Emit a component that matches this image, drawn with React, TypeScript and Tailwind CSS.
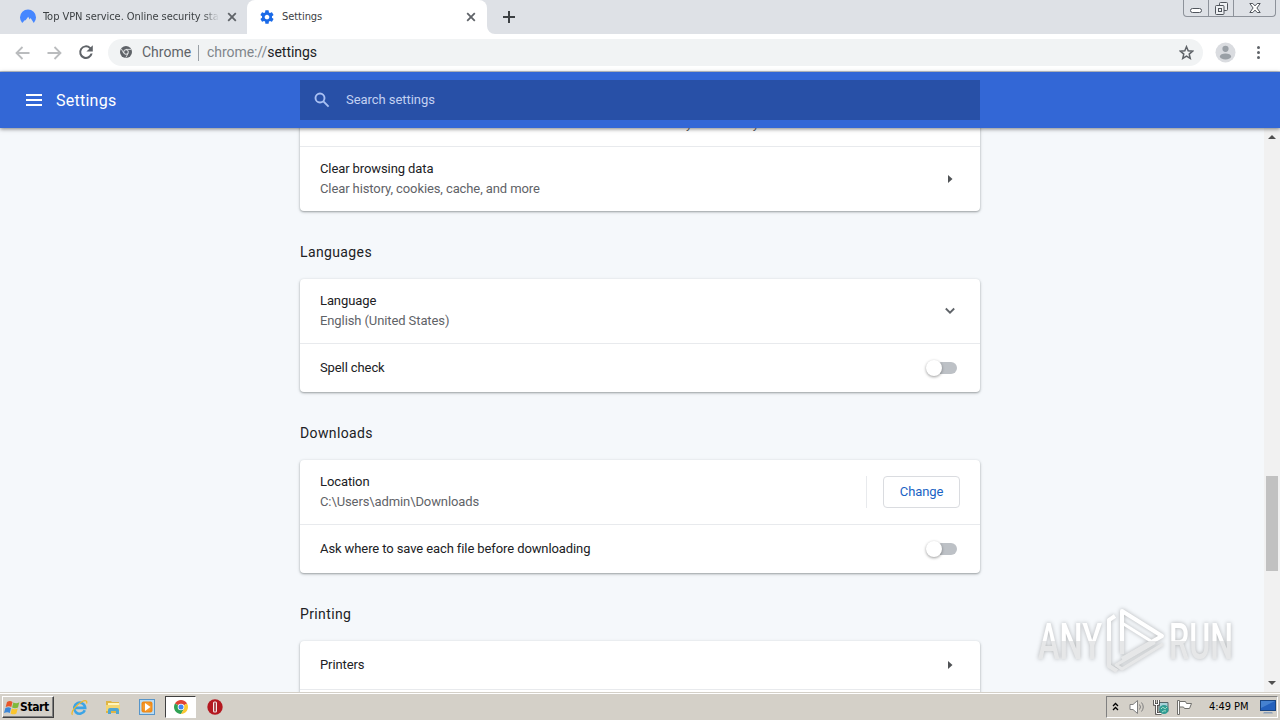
import React from 'react';

const Toggle = () => (
  <div className="relative mr-[3px] h-3 w-8">
    <div className="ml-1 h-3 w-7 rounded-full bg-[#bdc1c6]" />
    <div className="absolute -top-0.5 left-px h-4 w-4 rounded-full bg-white shadow-[0_1px_3px_rgba(0,0,0,0.4)]" />
  </div>
);

const ArrowRight = () => (
  <svg className="mr-[7px]" width="6" height="8" viewBox="0 0 6 8">
    <path d="M1 0l4.500 4L1 8z" fill="#505356" />
  </svg>
);

const ChevronDown = () => (
  <svg className="mr-[5px]" width="10" height="8" viewBox="0 0 10 8">
    <path d="M0.8 1.5L5 5.7l4.2-4.2" fill="none" stroke="#5f6368" strokeWidth="1.8" />
  </svg>
);

const ChangeButton = () => (
  <div className="flex items-center gap-4">
    <div className="h-8 w-px bg-[#e8eaed]" />
    <button className="h-8 w-[77px] rounded border border-[#dadce0] text-[13px] text-[#1a63c4]">
      Change
    </button>
  </div>
);

type RowProps = {
  title: React.ReactNode;
  sub?: React.ReactNode;
  action?: React.ReactNode;
  divider?: boolean;
};

const Row = ({ title, sub, action, divider }: RowProps) => (
  <div
    className={`flex items-center justify-between px-5 text-[13px] leading-5 tracking-[-0.1px] ${sub ? 'h-16' : 'h-12'} ${
      divider ? 'box-content border-t border-[#e8eaed]' : ''
    }`}
  >
    <div className="whitespace-nowrap">
      <div className="text-[#202124]">{title}</div>
      {sub && <div className="text-[#5f6368]">{sub}</div>}
    </div>
    {action}
  </div>
);

const Card = ({ children }: { children: React.ReactNode }) => (
  <div className="rounded bg-white shadow-[0_1px_2px_rgba(60,64,67,0.4),0_1px_3px_1px_rgba(60,64,67,0.1)]">
    {children}
  </div>
);

const Heading = ({ children }: { children: React.ReactNode }) => (
  <h2 className="flex h-[68px] items-center pt-[15px] text-[14px] tracking-[0.38px] text-[#202124]">{children}</h2>
);

const TabClose = () => (
  <svg width="10" height="10" viewBox="0 0 10 10" stroke="#5f6368" strokeWidth="1.8">
    <path d="M1.2 1.2l7.6 7.6M8.800 1.2L1.2 8.800" />
  </svg>
);

const TabStrip = () => (
  <div className="flex h-[34px] bg-[#dee1e6] font-['DejaVu_Sans_Condensed',sans-serif] text-[11px] tracking-[-0.05px] text-[#3c4043]">
    <div className="flex w-[247px] items-center pl-5">
      <svg width="16" height="16" viewBox="0 0 16 16">
        <path
          d="M2.2 14A8 8 0 1 1 13.8 14L10.6 9l-.9 1.5L8.2 7.8 5.4 11.5 5 10.9z"
          fill="#4687ff"
        />
      </svg>
      <div className="ml-[7px] w-[176px] overflow-hidden whitespace-nowrap [mask-image:linear-gradient(to_right,black_160px,transparent)]">
        Top VPN service. Online security sta
      </div>
      <div className="ml-2">
        <TabClose />
      </div>
    </div>
    <div className="flex w-60 items-center rounded-t-lg bg-white pl-3">
      <svg width="16" height="16" viewBox="0 0 24 24" fill="#1a6ae8">
        <path d="M19.43 12.98c.04-.32.07-.64.07-.98s-.03-.66-.07-.98l2.11-1.65c.19-.15.24-.42.12-.64l-2-3.46c-.12-.22-.39-.3-.61-.22l-2.49 1c-.52-.4-1.08-.73-1.69-.98l-.38-2.65A.49.49 0 0 0 14 2h-4c-.25 0-.46.18-.49.42l-.38 2.65c-.61.25-1.17.59-1.69.98l-2.49-1c-.23-.09-.49 0-.61.22l-2 3.46c-.13.22-.07.49.12.64l2.11 1.65c-.04.32-.07.65-.07.98s.03.66.07.98l-2.11 1.65c-.19.15-.24.42-.12.64l2 3.46c.12.22.39.3.61.22l2.49-1c.52.4 1.08.73 1.69.98l.38 2.65c.03.24.24.42.49.42h4c.25 0 .46-.18.49-.42l.38-2.65c.61-.25 1.17-.59 1.69-.98l2.49 1c.23.09.49 0 .61-.22l2-3.46c.12-.22.07-.49-.12-.64l-2.11-1.65zM12 15.5c-1.93 0-3.5-1.57-3.5-3.5s1.57-3.5 3.5-3.5 3.5 1.57 3.5 3.5-1.57 3.5-3.5 3.5z" />
      </svg>
      <div className="ml-[7px] flex-1">Settings</div>
      <div className="mr-[11px]">
        <TabClose />
      </div>
    </div>
    <svg className="self-end" width="8" height="8" viewBox="0 0 8 8">
      <path d="M0 0a8 8 0 0 0 8 8H0z" fill="#fff" />
    </svg>
    <svg className="mt-[11px] ml-2" width="12" height="12" viewBox="0 0 12 12" stroke="#3c4043" strokeWidth="2">
      <path d="M6 0v12M0 6h12" />
    </svg>
    <div className="mr-1 ml-auto flex h-[17px] w-[93px] rounded-b border border-t-0 border-[#8d929a]">
      <div className="flex w-[25px] items-end justify-center border-r border-[#8d929a] pb-[3px]">
        <div className="h-[5px] w-3 rounded-sm border border-[#50555c] bg-white" />
      </div>
      <div className="flex w-[25px] items-center justify-center border-r border-[#8d929a]">
        <svg width="13" height="13" viewBox="0 0 13 13" fill="#eef0f3" stroke="#50555c">
          <rect x="4.5" y="0.5" width="8" height="8" rx="1" />
          <rect x="0.5" y="3.5" width="8.5" height="9" rx="1" />
          <rect x="3.5" y="6.5" width="3" height="3" />
        </svg>
      </div>
      <div className="flex flex-1 items-center justify-center">
        <svg width="12" height="10" viewBox="0 0 12 10" fill="#fff" stroke="#50555c">
          <path d="M.8.5h3L6 2.9 8.2.5h3L7.9 5l3.3 4.5h-3L6 7.1 3.8 9.5h-3L4.1 5z" />
        </svg>
      </div>
    </div>
  </div>
);

const Toolbar = () => (
  <div className="flex h-[38px] items-center border-b border-[#c4c9d1] bg-white">
    <svg className="ml-[15px]" width="15" height="14" viewBox="0 0 15 14" fill="none" stroke="#babcbe" strokeWidth="1.8">
      <path d="M14.5 7H1.5M7.5 1L1.5 7l6 6" />
    </svg>
    <svg className="ml-[17px]" width="15" height="14" viewBox="0 0 15 14" fill="none" stroke="#babcbe" strokeWidth="1.8">
      <path d="M.5 7h13M7.5 1l6 6-6 6" />
    </svg>
    <svg className="mb-px ml-[12px]" width="24" height="24" viewBox="0 0 24 24" fill="#5f6368">
      <path
        transform="translate(2.4 2.4) scale(.8)"
        d="M20.5 3.5L17.9 6.1A8.5 8.5 0 1 0 20.3 14h-2.6a6 6 0 1 1-1.5-6.2L12.5 11.5h8z"
      />
    </svg>
    <div className="ml-2.5 flex h-[27px] w-[1095px] items-center rounded-full bg-[#f1f3f4] pl-3 text-[14px]">
      <svg className="mb-px" width="12" height="12" viewBox="0 0 12 12">
        <circle cx="6" cy="6" r="6" fill="#5f6368" />
        <circle cx="6" cy="6" r="2.3" fill="#5f6368" stroke="#f1f3f4" />
        <path d="M6 3.4h5.2M3.8 7.3L1.3 2.9M8.2 7.3L5.8 11.6" stroke="#f1f3f4" strokeWidth=".8" />
      </svg>
      <span className="ml-[10px] w-[50px] whitespace-nowrap text-[#5f6368]">Chrome</span>
      <div className="mr-2 ml-1.5 h-4 w-px bg-[#9aa0a6]" />
      <span className="tracking-[-0.05px] text-[#80868b]">
        chrome://<span className="text-[#202124]">settings</span>
      </span>
      <svg className="mr-[9px] ml-auto" width="15" height="15" viewBox="0 0 16 16" fill="none" stroke="#5f6368" strokeWidth="1.6">
        <path d="M8 1.8l1.8 4.4 4.7.4-3.6 3.1 1.1 4.6L8 11.8l-4 2.5 1.1-4.6-3.6-3.1 4.7-.4z" />
      </svg>
    </div>
    <svg className="ml-3" width="21" height="21" viewBox="0 0 21 21">
      <circle cx="10.5" cy="10.5" r="10" fill="#dadce0" />
      <circle cx="10.5" cy="6.8" r="3.1" fill="#9aa0a6" />
      <ellipse cx="10.5" cy="14.4" rx="5.6" ry="3" fill="#9aa0a6" />
    </svg>
    <div className="ml-[21px] flex flex-col gap-0.5">
      <div className="h-[3px] w-[3px] rounded-full bg-[#5f6368]" />
      <div className="h-[3px] w-[3px] rounded-full bg-[#5f6368]" />
      <div className="h-[3px] w-[3px] rounded-full bg-[#5f6368]" />
    </div>
  </div>
);

const Header = () => (
  <header className="relative z-10 flex h-14 items-center bg-[#3367d6] shadow-[0_1px_4px_rgba(0,0,0,0.5)]">
    <div className="ml-[26px] flex w-4 flex-col gap-[3px]">
      <div className="h-0.5 bg-white" />
      <div className="h-0.5 bg-white" />
      <div className="h-0.5 bg-white" />
    </div>
    <h1 className="ml-3.5 w-[244px] pt-0.5 text-[16px] tracking-[0.25px] text-white">Settings</h1>
    <div className="flex h-10 w-[680px] items-center bg-[#2850a7] pl-3.5 text-[13px] text-[#c3d1f2]">
      <svg width="16" height="16" viewBox="0 0 16 16" fill="none" stroke="#a9c0f3" strokeWidth="1.9">
        <circle cx="6" cy="6" r="4.5" />
        <path d="M9.4 9.4l5.2 5.2" />
      </svg>
      <span className="ml-4 tracking-[-0.05px]">Search settings</span>
    </div>
  </header>
);

const Scrollbar = () => (
  <div className="flex w-4 flex-col items-center bg-[#f1f1f1] pt-[7px] pb-[7px]">
    <svg width="8" height="4" viewBox="0 0 8 4">
      <path d="M0 4l4-4 4 4z" fill="#505050" />
    </svg>
    <div className="mt-[337px] h-[95px] w-3 bg-[#c1c1c1]" />
    <svg className="mt-auto" width="8" height="4" viewBox="0 0 8 4">
      <path d="M0 0h8L4 4z" fill="#505050" />
    </svg>
  </div>
);

const Watermark = () => (
  <svg
    className="absolute right-[40px] bottom-[43px] z-20 font-['Roboto',sans-serif] [filter:drop-shadow(0_0_2px_rgba(0,0,0,0.28))]"
    width="208"
    height="72"
    viewBox="0 0 208 72"
  >
    <defs>
      <linearGradient id="fade" x1="0" y1="0" x2="0" y2="72" gradientUnits="userSpaceOnUse">
        <stop offset="0.5" stopColor="#fff" />
        <stop offset="0.5" stopColor="#e6e7e8" />
      </linearGradient>
    </defs>
    <g fill="url(#fade)" fontSize="50" fontWeight="500">
      <text x="6" y="54" textLength="64" lengthAdjust="spacingAndGlyphs">ANY</text>
      <text x="137" y="54" textLength="64" lengthAdjust="spacingAndGlyphs">RUN</text>
    </g>
    <g fill="none" stroke="url(#fade)" strokeWidth="4" strokeLinejoin="round">
      <path d="M83 11l-6 4v46l8 5M90 49V6l40 25-40 23" />
      <path d="M90 18l32 20-38 22 6 4 41-25" strokeWidth="3" />
    </g>
  </svg>
);

const StartFlag = () => (
  <svg width="16" height="15" viewBox="0 0 16 15">
    <path d="M3 2q3-2 5.5 0L7.3 7Q5 5.3 1.7 7z" fill="#e8562a" />
    <path d="M9.3 2.4q3 1.6 6-.2L14 7.4q-3 1.6-5.9 0z" fill="#7fb93a" />
    <path d="M1.4 8q3-1.6 5.6 0l-1.2 5Q3.4 11.4 0 13z" fill="#3c87d8" />
    <path d="M7.8 8.4q3 1.5 5.9 0l-1.3 5q-3 1.7-5.8 0z" fill="#fbc52c" />
  </svg>
);

const Taskbar = () => (
  <footer className="relative flex h-7 items-center border-t border-[#d4d0c8] bg-[#d4d0c8] pt-px font-['DejaVu_Sans_Condensed',sans-serif] text-[11px] text-black shadow-[inset_0_1px_0_#fff]">
    <div className="ml-0.5 flex h-[22px] w-[52px] items-center border border-t-white border-r-[#404040] border-b-[#404040] border-l-white pl-px font-bold shadow-[inset_-1px_-1px_0_#808080]">
      <StartFlag />
      <span className="text-[12px] tracking-[-0.4px]">Start</span>
    </div>
    {/* Internet Explorer */}
    <svg className="ml-[17px]" width="17" height="17" viewBox="0 0 17 17" fill="none">
      <path d="M13.8 11.3A5.5 5.5 0 1 1 14.2 8.9H4" stroke="#3ba4e6" strokeWidth="2.6" />
      <path d="M1.5 15.8C-.8 13.5 5 6 10.5 3c4-2.2 6-1.6 5 1.5" stroke="#efb92d" strokeWidth="1.3" />
    </svg>
    {/* Explorer */}
    <svg className="ml-[17px]" width="16" height="16" viewBox="0 0 16 16">
      <path d="M1 2h5l1 1h7v11H1z" fill="#dfb545" />
      <path d="M3 4h11v7H3z" fill="#fff5bb" />
      <path d="M1 6h14v6H1z" fill="#f3d672" />
      <path d="M3 15v-4q0-2 2-2h7q2 0 2 2v4h-3v-3H6v3z" fill="#4fa6d2" />
    </svg>
    {/* Media Player */}
    <svg className="ml-[18px]" width="16" height="16" viewBox="0 0 16 16">
      <rect x=".5" y=".5" width="15" height="15" fill="#b9dcf4" stroke="#5795c9" />
      <rect x="2.5" y="2.5" width="11" height="11" rx="2" fill="#f08a18" />
      <circle cx="8" cy="8" r="4.5" fill="#f59a2c" />
      <path d="M6 4l5.5 4L6 12z" fill="#fff" />
    </svg>
    <div className="ml-[10px] flex h-[22px] w-[31px] items-center justify-center border border-t-[#404040] border-r-white border-b-white border-l-[#404040] bg-white">
      <svg width="14" height="14" viewBox="0 0 14 14">
        <path d="M7 7L.94 3.5A7 7 0 0 1 13.06 3.5z" fill="#e04335" />
        <path d="M7 7L.94 3.5A7 7 0 0 0 7 14l3-5z" fill="#30a254" />
        <path d="M7 7l6.06-3.5A7 7 0 0 1 7 14l3-5.2z" fill="#fbc831" />
        <circle cx="7" cy="7" r="3.3" fill="#fff" />
        <circle cx="7" cy="7" r="2.5" fill="#4285f4" />
      </svg>
    </div>
    {/* Opera */}
    <svg className="ml-[11px]" width="16" height="16" viewBox="0 0 16 16">
      <circle cx="8" cy="8" r="7.7" fill="#b41820" />
      <rect x="6" y="2.5" width="4" height="11" rx="1.5" fill="#f7e9e9" />
      <rect x="7.3" y="3.5" width="1.4" height="9" fill="#8c1118" />
    </svg>
    <div className="mr-0.5 ml-auto flex h-[22px] w-[172px] items-center border border-t-[#808080] border-r-white border-b-white border-l-[#808080]">
      <svg className="mb-0.5 ml-[5px]" width="7" height="9" viewBox="0 0 7 9" fill="none" stroke="#000" strokeWidth="1.3">
        <path d="M1 4l2.5-2.5L6 4M1 8l2.5-2.5L6 8" />
      </svg>
      <svg className="ml-[10px]" width="17" height="16" viewBox="0 0 17 16" stroke="#808080">
        <path d="M1 5.500h3L8.500 1.500v13L4 10.500H1z" fill="#fff" />
        <path d="M10.5 5.500q2 2.500 0 5M12.5 3.500q3.500 4.500 0 9" fill="none" />
      </svg>
      <svg className="ml-[7px]" width="17" height="16" viewBox="0 0 17 16">
        <path d="M6 3.5h9v9H6z" fill="#a6d2d8" stroke="#55666a" />
        <path d="M1.5 1v4.5h4V1M3.5 5.5v9h5" fill="none" stroke="#444" strokeWidth="2.6" />
        <path d="M1.5 1v4.5h4V1M3.5 5.5v9h5" fill="none" stroke="#fff" />
        <circle cx="11" cy="10.5" r="4.5" fill="#2f9c93" />
        <path d="M8 10q2-3 3-1t3-1M9 13q2-2 4-1" fill="none" stroke="#a8e0c8" />
      </svg>
      <svg className="ml-[6px]" width="17" height="16" viewBox="0 0 17 16" fill="#fff" stroke="#70706c">
        <path d="M1.5 1.5h2v14h-2z" />
        <path d="M3.5 2.5h6l1 2h5l-2 5h-5l-1-1.5h-4z" />
      </svg>
      <span className="ml-[16px] w-[40px] tracking-[-0.05px] whitespace-nowrap">4:49 PM</span>
      <svg className="ml-[11px]" width="16" height="14" viewBox="0 0 16 14">
        <rect x=".5" y=".5" width="15" height="10" fill="#2461bd" stroke="#194582" />
        <path d="M1 1h14L1 8z" fill="#4682d0" />
        <path d="M4 12h8l1 1.5H3z" fill="#8ca0b8" />
      </svg>
    </div>
  </footer>
);

const App = () => (
  <div className="relative flex h-[720px] w-[1280px] flex-col overflow-hidden bg-[#f5f8fb] font-['Roboto',sans-serif]">
    <TabStrip />
    <Toolbar />
    <Header />
    <main className="flex min-h-0 flex-1 overflow-hidden">
      <div className="flex-1 pl-[300px]">
        <div className="-mt-[46px] w-[680px]">
          <Card>
            <Row
              title={'\u00a0'}
              sub="Control what information websites can use and what content they can show you"
            />
            <Row
              divider
              title="Clear browsing data"
              sub="Clear history, cookies, cache, and more"
              action={<ArrowRight />}
            />
          </Card>
          <Heading>Languages</Heading>
          <Card>
            <Row title="Language" sub="English (United States)" action={<ChevronDown />} />
            <Row divider title="Spell check" action={<Toggle />} />
          </Card>
          <Heading>Downloads</Heading>
          <Card>
            <Row title="Location" sub={'C:\\Users\\admin\\Downloads'} action={<ChangeButton />} />
            <Row divider title="Ask where to save each file before downloading" action={<Toggle />} />
          </Card>
          <Heading>Printing</Heading>
          <Card>
            <Row title="Printers" action={<ArrowRight />} />
            <Row divider title={'\u00a0'} />
          </Card>
        </div>
      </div>
      <Scrollbar />
    </main>
    <Watermark />
    <Taskbar />
  </div>
);

export default App;
